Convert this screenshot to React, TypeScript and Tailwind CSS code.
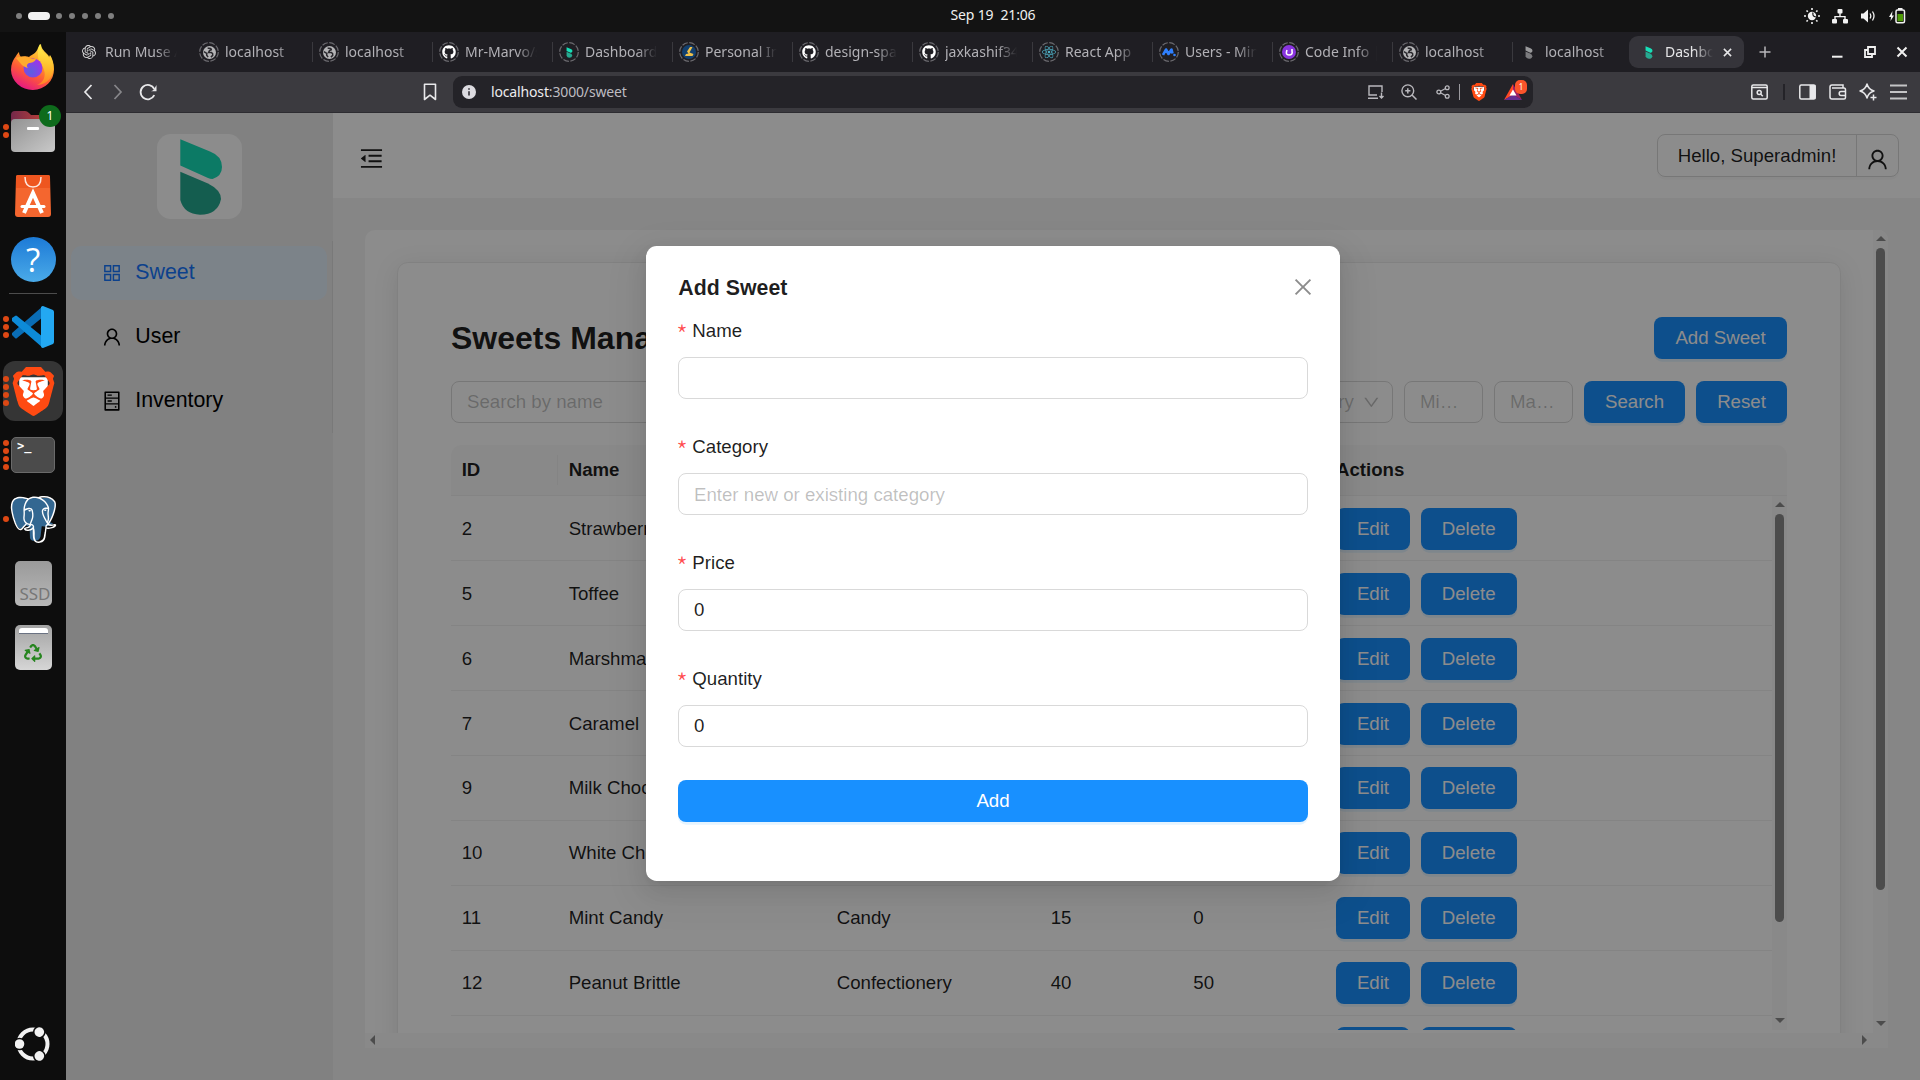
import React from "react";
import {
  AiOutlineAppstore,
  AiOutlineClose,
  AiOutlineDown,
  AiOutlineHdd,
  AiOutlineMenuFold,
  AiOutlineUser,
} from "react-icons/ai";
import { FaGithub, FaReact, FaRecycle } from "react-icons/fa";
import { SiBrave, SiOpenai, SiPostgresql } from "react-icons/si";

/* ---------- Brand drawings ---------- */

function BeeLogo({ className, top = "#17dfb8", bottom = "#26a990" }: { className?: string; top?: string; bottom?: string }) {
  return (
    <svg viewBox="22 4 44 78" className={className}>
      <path d="M23.3 5.3 L53 17.5 Q65 22 65 33 Q65 42 55.5 45 Q53 45 51 44 L23.3 31.5 Z" fill={top} />
      <path d="M23.3 37.7 L51 49.5 Q64 56 64 65 Q61 80.5 43 80.7 Q27 80 23.3 66 Z" fill={bottom} />
    </svg>
  );
}

function BraveIcon({ className }: { className: string }) {
  return (
    <span className={`relative inline-block ${className}`}>
      <svg viewBox="0 0 24 24" className="absolute inset-0 h-full w-full">
        <path d="M5 5h14v9l-7 7-7-7z" fill="#fff" />
      </svg>
      <SiBrave className="absolute inset-0 h-full w-full text-[#ff4a12]" />
    </span>
  );
}

function Firefox() {
  return (
    <svg viewBox="0 0 44 46" className="h-[46px] w-[44px]">
      <defs>
        <linearGradient id="ffBody" x1="0.8" y1="0" x2="0.3" y2="1">
          <stop offset="0" stopColor="#fff44f" />
          <stop offset="0.35" stopColor="#ffa52a" />
          <stop offset="0.65" stopColor="#ff5a36" />
          <stop offset="1" stopColor="#e31587" />
        </linearGradient>
        <linearGradient id="ffWing" x1="0.5" y1="0" x2="0.5" y2="1">
          <stop offset="0" stopColor="#fff44f" />
          <stop offset="0.6" stopColor="#ffc02c" />
          <stop offset="1" stopColor="#ff8a20" />
        </linearGradient>
        <radialGradient id="ffCore" cx="0.4" cy="0.7" r="0.7">
          <stop offset="0" stopColor="#5b5fe0" />
          <stop offset="1" stopColor="#a033e8" />
        </radialGradient>
      </defs>
      <path d="M5 12c1-2 2-3 3-4 0 2 1 4 2 5 3-1 6-1 8 0 3-3 7-3 9-9 1-2 1-3 3-4 0 4 3 7 6 10 1 1 2 2 2 3l1-2c2 3 4 8 4 14a21.500 20.500 0 0 1-43 1c0-6 2-10 5-14z" fill="url(#ffBody)" />
      <path d="M29 0c0 4 2 7 5 10 3 2 4 4 5 5l0-3c3 5 5 12 2 19-3 7-10 10-15 10 7-3 9-9 7-15-1-5-6-8-6-14 0-5 0-9 2-12z" fill="url(#ffWing)" opacity="0.85" />
      <circle cx="22" cy="24" r="9.500" fill="url(#ffCore)" />
      <path d="M5 14c5-2 10-2 13 0 1 1 4 1 7 1-1 3-5 4-7 4-2 1-3 3-1 5-5-1-7-4-12-10z" fill="#ffab2e" />
    </svg>
  );
}

function Files() {
  return (
    <svg viewBox="0 0 46 44" className="h-[44px] w-[46px]">
      <defs>
        <linearGradient id="fBack" x1="0" x2="1">
          <stop offset="0" stopColor="#74284a" />
          <stop offset="1" stopColor="#d04a34" />
        </linearGradient>
        <linearGradient id="fFront" x1="0" y1="0" x2="1" y2="1">
          <stop offset="0" stopColor="#929292" />
          <stop offset="1" stopColor="#c9c9c9" />
        </linearGradient>
      </defs>
      <path d="M1 6q0-4 4-4h10q2 0 4 2l2 2h20q3 0 3 3v12H1z" fill="url(#fBack)" />
      <rect x="1" y="10" width="44" height="33" rx="4" fill="url(#fFront)" />
      <rect x="17" y="18" width="12" height="3" rx="1" fill="#fff" />
    </svg>
  );
}

function Software() {
  return (
    <svg viewBox="0 0 36 42" className="mt-[2px] h-[42px] w-[36px]">
      <path d="M3 0h30q2 0 2 2l1 37q0 3-3 3H3q-3 0-3-3L1 2q0-2 2-2z" fill="#f4662f" />
      <path d="M3 0h30q2 0 2 2l0 11H1L1 2q0-2 2-2z" fill="#ee5620" />
      <path d="M10 2q0 10 8 10t8-10" fill="none" stroke="#fff" strokeOpacity="0.85" strokeWidth="1.500" />
      <path d="M9 38 18 18l9 20" fill="none" stroke="#fff" strokeWidth="4" />
      <path d="M7 31.500h22" stroke="#fff" strokeWidth="3" strokeLinecap="round" />
    </svg>
  );
}

function VsCode() {
  return (
    <svg viewBox="0 0 42 42" className="h-[42px] w-[42px]">
      <path d="M0 27 31 0v11L5 32q-1 1-2 0l-3-3q-1-1 0-2z" fill="#0a6db5" />
      <path d="M0 12l3-2q1-1 2 0l26 21v11L0 15q-1-2 0-3z" fill="#0d8bd8" />
      <path d="M31 0l10 4q1 1 1 2v30q0 1-1 2l-10 4q-2 0-2-2V1q1-1 2-1z" fill="#23a8f2" />
    </svg>
  );
}

function Postgres() {
  return (
    <span className="relative block size-[47px]">
      <svg viewBox="0 0 24 24" className="absolute inset-0 h-full w-full">
        <path
          d="M5.500.8C2 .8.600 3 .900 6.200c.3 3.600 2.200 9.800 4.200 10.400 1.200.3 2.200-.8 3.100-1.500l1.800.9.200 5.500c.5 2.200 4.800 2 5.400-.8l.6-5.200c2 .3 4.500-.2 5.800-1.500l-2-.8c1.800-2.800 3.600-7 3.200-9.200C22.500 1.500 19.500.5 16.500 1.200 14 .4 12 .5 10 1.700 8.500 1.100 7 .8 5.500.8z"
          fill="#336791"
        />
      </svg>
      <SiPostgresql className="absolute inset-0 h-full w-full text-white" />
    </span>
  );
}

function Trash() {
  return (
    <div className="flex h-[45px] w-[37px] flex-col items-center rounded-[5px] bg-gradient-to-b from-[#a3a3a3] to-[#d6d6d6]">
      <div className="mt-[3px] h-[6px] w-[29px] rounded-t-[3px] border-b border-gray-500 bg-white" />
      <FaRecycle className="mt-[10px] size-[18px] text-[#26851f]" />
    </div>
  );
}

function UbuntuMark() {
  return (
    <svg viewBox="-18 -18 36 36" className="size-[36px]">
      <circle r="14.500" fill="none" stroke="#f2f2f2" strokeWidth="4" />
      {[180, 62, -62].map((a) => (
        <g key={a} transform={`rotate(${a})`}>
          <circle cx="13.500" r="6.300" fill="#0d0d0d" />
          <circle cx="13.500" r="4.800" fill="#f2f2f2" />
        </g>
      ))}
    </svg>
  );
}

/* ---------- Desktop chrome ---------- */

function TopBar() {
  return (
    <div className="grid h-8 grid-cols-[1fr_auto_1fr] items-center bg-[#131313] font-['Noto_Sans',sans-serif]">
      <div className="flex items-center gap-[7px] pl-4">
        <i className="size-[6px] rounded-full bg-[#7f7f7f]" />
        <i className="-mx-px h-2 w-[22px] rounded-full bg-[#f2f2f2]" />
        {[0, 1, 2, 3, 4].map((i) => (
          <i key={i} className="size-[6px] rounded-full bg-[#7f7f7f]" />
        ))}
      </div>
      <div className="ml-[66px] whitespace-pre pb-[2px] text-[14px] leading-5 tracking-[-0.150px] text-[#f0f0f0]">Sep 19  21:06</div>
      <div className="flex items-center justify-end pr-[14px] text-[#f2f2f2]">
        <svg viewBox="0 0 16 16" className="mr-3 size-4">
          <circle cx="8" cy="8" r="4.200" fill="currentColor" />
          <path d="M8 0v2M8 14v2M0 8h2M14 8h2M2.500 2.500l1.300 1.300M12.200 12.200l1.300 1.300M2.500 13.500l1.300-1.300M12.200 3.800l1.300-1.300" stroke="currentColor" strokeWidth="1.600" />
          <path d="M9 4.500q-1 4 3 4.500" stroke="#131313" strokeWidth="1.200" fill="none" />
        </svg>
        <svg viewBox="0 0 16 16" className="mr-3 size-4" fill="currentColor">
          <rect x="5.500" y="1" width="5" height="4.500" rx="1" />
          <rect x="0" y="11" width="5" height="4.500" rx="1" />
          <rect x="11" y="11" width="5" height="4.500" rx="1" />
          <path d="M7.300 5h1.400v3h5v3h-1.400V9.300H3.700V11H2.300V8h5z" />
        </svg>
        <svg viewBox="0 0 16 16" className="mr-3 size-4">
          <path d="M1 5.500h2.500L8 1.500v13l-4.500-4H1z" fill="currentColor" />
          <path d="M10 5.500q1.600 2.500 0 5M12.500 3.500q3 4.500 0 9" stroke="currentColor" strokeWidth="1.300" fill="none" />
        </svg>
        <svg viewBox="0 0 18 16" className="h-4 w-[18px]">
          <path d="M4.500 3 1 9h2l-.5 4L6 7.500H4z" fill="currentColor" />
          <rect x="8" y="2" width="8.500" height="12.800" rx="1.500" fill="none" stroke="currentColor" strokeWidth="1.500" />
          <rect x="10" y="0" width="4.500" height="2" fill="currentColor" />
          <rect x="9.500" y="6" width="5.500" height="7.300" fill="#4e9a06" />
        </svg>
      </div>
    </div>
  );
}

function DockSlot({ dots = 0, children, active = false }: { dots?: number; children: React.ReactNode; active?: boolean }) {
  return (
    <div className="relative flex h-16 w-full shrink-0 items-center justify-center">
      {active && <div className="absolute inset-x-[3px] inset-y-[2px] rounded-[12px] bg-[#353535]" />}
      <div className="absolute left-[3px] flex flex-col gap-[2.300px]">
        {Array.from({ length: dots }).map((_, i) => (
          <i key={i} className="size-[6px] rounded-full bg-[#dd4814]" />
        ))}
      </div>
      <div className="relative flex items-center justify-center">{children}</div>
    </div>
  );
}

function Dock() {
  return (
    <div className="flex w-[66px] shrink-0 flex-col items-center bg-[#0d0d0d] pt-[3px]">
      <DockSlot><Firefox /></DockSlot>
      <DockSlot dots={2}>
        <Files />
        <span className="absolute -right-[5px] -top-[4px] flex size-[22px] items-center justify-center rounded-full bg-[#0e6b1c] font-['Noto_Sans',sans-serif] text-[12px] text-white">1</span>
      </DockSlot>
      <DockSlot><Software /></DockSlot>
      <DockSlot>
        <div className="flex size-[45px] items-center justify-center rounded-full bg-gradient-to-b from-[#1c7ad6] to-[#4aaae8] font-['Open_Sans',sans-serif] text-[33px] leading-none text-white">?</div>
      </DockSlot>
      <div className="mt-[2px] mb-[1px] h-px w-12 shrink-0 bg-[#4c4c4c]" />
      <DockSlot dots={3}><VsCode /></DockSlot>
      <DockSlot dots={4} active>
        <BraveIcon className="size-[49px]" />
      </DockSlot>
      <DockSlot dots={4}>
        <div className="h-[36px] w-[44px] rounded-[5px] border border-[#6a6a6a] bg-[#4b4b4b] pl-[5px] font-['DejaVu_Sans_Mono',monospace] text-[12px] leading-4 font-bold text-white">&gt;_</div>
      </DockSlot>
      <DockSlot dots={1}><Postgres /></DockSlot>
      <DockSlot>
        <div className="flex h-[45px] w-[37px] items-end justify-end rounded-[5px] bg-gradient-to-b from-[#9a9a9a] to-[#b8b8b8] pr-px pb-[4px] font-['Noto_Sans',sans-serif] text-[17px] leading-4 text-[#777]">SSD</div>
      </DockSlot>
      <DockSlot><Trash /></DockSlot>
      <div className="mt-auto mb-[18px]"><UbuntuMark /></div>
    </div>
  );
}

/* ---------- Browser ---------- */

type TabKind = "openai" | "globe" | "github" | "bee" | "personal" | "react" | "users" | "code" | "beeGray";

const TABS: { kind: TabKind; title: string }[] = [
  { kind: "openai", title: "Run Muse A" },
  { kind: "globe", title: "localhost" },
  { kind: "globe", title: "localhost" },
  { kind: "github", title: "Mr-Marvo/s" },
  { kind: "bee", title: "Dashboard" },
  { kind: "personal", title: "Personal Inf" },
  { kind: "github", title: "design-spac" },
  { kind: "github", title: "jaxkashif34/" },
  { kind: "react", title: "React App" },
  { kind: "users", title: "Users - Mint" },
  { kind: "code", title: "Code Info |" },
  { kind: "globe", title: "localhost" },
  { kind: "beeGray", title: "localhost" },
];

function Favicon({ kind }: { kind: TabKind }) {
  switch (kind) {
    case "openai":
      return <SiOpenai className="size-[14px] text-[#d8d8d8]" />;
    case "globe":
      return (
        <svg viewBox="0 0 14 14" className="size-[13px]">
          <circle cx="7" cy="7" r="7" fill="#b4b4b6" />
          <path d="M5 2.500q4-.5 4 1.500l-2 1-1 2h3q2 1 1.500 3L8.500 12M1 6l3 2v2l1.500 2" fill="none" stroke="#29282d" strokeWidth="1.600" />
        </svg>
      );
    case "github":
      return <FaGithub className="size-[14px] text-white" />;
    case "bee":
      return <BeeLogo className="h-[11px] w-[7px]" />;
    case "beeGray":
      return <BeeLogo className="h-[13px] w-[8px]" top="#9a9a9c" bottom="#7b7b7e" />;
    case "personal":
      return (
        <svg viewBox="0 0 14 14" className="size-[14px]">
          <circle cx="7" cy="7" r="7" fill="#12406f" />
          <path d="M8 2h2.500L7.500 7.500l4 1.500-1 2H3l1-2 2.500-.5L5 6.500z" fill="#efc04a" />
        </svg>
      );
    case "react":
      return <FaReact className="size-[14px] text-[#4fb0c6]" />;
    case "users":
      return (
        <svg viewBox="0 0 14 14" className="size-[14px]">
          <path d="M1 10 4 4.500 6.500 9 9.500 4.500 10.500 8.500" fill="none" stroke="#2f80ff" strokeWidth="2.600" strokeLinejoin="round" />
          <circle cx="12.500" cy="10" r="1.300" fill="#2f80ff" />
        </svg>
      );
    case "code":
      return (
        <svg viewBox="0 0 14 14" className="size-[14px]">
          <circle cx="7" cy="7" r="7" fill="#8a35e0" />
          <path d="M5 5q-2 5 2 5t3-4V4" fill="none" stroke="#fff" strokeWidth="1.600" />
        </svg>
      );
  }
}

function TabStrip() {
  return (
    <div className="flex h-10 items-center bg-[#1f1e23] pl-[7px] font-['Noto_Sans',sans-serif] text-[14px] text-[#b2b1b6]">
      {TABS.map((t, i) => {
        const ringed = t.kind !== "openai" && t.kind !== "beeGray";
        return (
          <div key={i} className="flex h-8 w-[120px] shrink-0 items-center pl-[6px]">
            <span className="relative flex size-5 shrink-0 items-center justify-center">
              {ringed && (
                <svg viewBox="0 0 20 20" className="absolute inset-0">
                  <circle cx="10" cy="10" r="9.300" fill="none" stroke="#6b6a6f" strokeWidth="1.200" strokeDasharray="5.800 1.500" />
                </svg>
              )}
              <Favicon kind={t.kind} />
            </span>
            <span className="ml-[6px] w-[72px] overflow-hidden pb-[2px] whitespace-nowrap [mask-image:linear-gradient(to_right,#000_72%,transparent)]">
              {t.title}
            </span>
            <span className={i === 0 || i === 12 ? "w-px" : "ml-auto h-5 w-px bg-[#3a393e]"} />
          </div>
        );
      })}
      <div className="-ml-[4px] flex h-8 w-[115px] shrink-0 items-center rounded-[9px] bg-[#35343a] pl-[16px] text-[#e6e6e8]">
        <BeeLogo className="h-[13px] w-[8px]" />
        <span className="ml-[12px] w-[48px] overflow-hidden pb-[2px] whitespace-nowrap [mask-image:linear-gradient(to_right,#000_60%,transparent)]">Dashboard</span>
        <svg viewBox="0 0 10 10" className="ml-[10px] size-[9px]">
          <path d="M1 1l8 8M9 1 1 9" stroke="currentColor" strokeWidth="1.700" />
        </svg>
      </div>
      <svg viewBox="0 0 12 12" className="ml-[15px] size-[12px]">
        <path d="M6 .5v11M.5 6h11" stroke="#b8b7bb" strokeWidth="1.500" />
      </svg>
      <div className="ml-auto flex items-center gap-[20.500px] pr-[12px] text-[#f0f0f0]">
        <svg viewBox="0 0 12 12" className="size-[12px]"><path d="M1 10.700h10.500" stroke="currentColor" strokeWidth="2" /></svg>
        <svg viewBox="0 0 12 12" className="size-[12px]">
          <path d="M4 1h7v7H4zM4 4H1v7h7V8" fill="none" stroke="currentColor" strokeWidth="1.800" />
        </svg>
        <svg viewBox="0 0 12 12" className="size-[12px]"><path d="M1.500 1.500l9 9M10.500 1.500l-9 9" stroke="currentColor" strokeWidth="2" /></svg>
      </div>
    </div>
  );
}

function Toolbar() {
  return (
    <div className="flex h-[41px] items-center border-b border-[#2d2c31] bg-[#3b3a3f] text-[#e8e8ea]">
      <svg viewBox="0 0 10 16" className="ml-[17px] h-4 w-[10px]"><path d="M8.500 1 2 8l6.500 7" fill="none" stroke="currentColor" strokeWidth="1.700" /></svg>
      <svg viewBox="0 0 10 16" className="ml-[20px] h-4 w-[10px] text-[#88878b]"><path d="M1.500 1 8 8l-6.500 7" fill="none" stroke="currentColor" strokeWidth="1.700" /></svg>
      <svg viewBox="0 0 18 18" className="ml-[16px] size-[18px]">
        <path d="M15.300 12.200a7.200 7.200 0 1 1 0-6.200" fill="none" stroke="currentColor" strokeWidth="1.800" />
        <path d="M17.500 2v6.300h-5.500q2-.5 3-2z" fill="currentColor" />
      </svg>
      <svg viewBox="0 0 14 18" className="ml-[266px] h-[18px] w-[14px]"><path d="M1.500 1.200h11v15.300L7 12.200l-5.500 4.300z" fill="none" stroke="currentColor" strokeWidth="1.600" strokeLinejoin="round" /></svg>

      <div className="ml-4 flex h-8 w-[1080px] items-center rounded-[9px] bg-[#242328] pl-[9px]">
        <svg viewBox="0 0 14 14" className="size-[14px]">
          <circle cx="7" cy="7" r="7" fill="#dcdbe0" />
          <path d="M7 6.200v4.300M7 3.200v1.600" stroke="#242328" strokeWidth="1.500" />
        </svg>
        <span className="ml-[15px] pb-[2px] font-['Noto_Sans',sans-serif] text-[14px] tracking-[-0.150px]">
          <span className="text-[#ececee]">localhost</span>
          <span className="text-[#bdbcc1]">:3000/sweet</span>
        </span>
        <div className="ml-auto flex items-center text-[#b9b8bd]">
          <svg viewBox="0 0 17 14" className="h-[14px] w-[17px]">
            <path d="M11 13.200H1M10 10H2V1h13v6M14.500 7.500v5.500M12.500 11l2 2 2-2" fill="none" stroke="currentColor" strokeWidth="1.400" />
          </svg>
          <svg viewBox="0 0 16 16" className="ml-[17px] size-[16px]">
            <path d="M11 11l4.500 4.500M6.800 4.200v5.200M4.200 6.800h5.200" stroke="currentColor" strokeWidth="1.500" />
            <circle cx="6.800" cy="6.800" r="5.900" fill="none" stroke="currentColor" strokeWidth="1.400" />
          </svg>
          <svg viewBox="0 0 14 14" className="ml-[19px] size-[14px]">
            <path d="M4.500 6.300l5-2.800M4.500 7.700l5 2.800" stroke="currentColor" strokeWidth="1.200" />
            <g fill="none" stroke="currentColor" strokeWidth="1.300">
              <circle cx="2.800" cy="7" r="1.900" /><circle cx="11.200" cy="2.800" r="1.900" /><circle cx="11.200" cy="11.200" r="1.900" />
            </g>
          </svg>
          <span className="ml-[9px] h-4 w-px bg-[#9b9a9f]" />
          <BraveIcon className="ml-[10px] size-[18px]" />
          <span className="relative mr-[11px] ml-[16px] block h-[16px] w-[18px]">
            <svg viewBox="0 0 18 16" className="h-[16px] w-[18px]">
              <path d="M9 0 0 16l9-5z" fill="#ff4724" />
              <path d="M9 0l9 16-9-5z" fill="#9e1f63" />
              <path d="M0 16h18l-9-5.500z" fill="#662d91" />
              <path d="M9 5.500l3.500 6h-7z" fill="#fff" />
            </svg>
            <span className="absolute -top-[4px] -right-[5px] flex h-[14px] w-[12px] items-center justify-center rounded-[5px] bg-[#fb542b] font-['Noto_Sans',sans-serif] text-[8px] leading-none text-white">1</span>
          </span>
        </div>
      </div>

      <div className="ml-auto flex items-center pr-[13px]">
        <svg viewBox="0 0 17 16" className="h-4 w-[17px]" fill="none" stroke="currentColor" strokeWidth="1.500">
          <rect x="0.800" y="1" width="15.400" height="14" rx="1.500" /><path d="M1 3.500h15" />
          <circle cx="8.200" cy="8.500" r="2" /><path d="M9.800 10.200l2 2" />
        </svg>
        <span className="ml-[15px] h-4 w-[2px] bg-[#242328]" />
        <svg viewBox="0 0 17 16" className="ml-[14px] h-4 w-[17px]">
          <rect x="0.800" y="1" width="15.400" height="14" rx="1.500" fill="none" stroke="currentColor" strokeWidth="1.500" />
          <rect x="10.500" y="1" width="6" height="14" fill="currentColor" />
        </svg>
        <svg viewBox="0 0 18 16" className="ml-[13px] h-4 w-[18px]" fill="none" stroke="currentColor" strokeWidth="1.500">
          <path d="M14 4V1H3Q1 1 1 3v10q0 2 2 2h12q1.500 0 1.500-1.500V6Q16.500 4 15 4H3" />
          <path d="M17 7.500h-5q-1.800 0-1.800 2t1.800 2h5" />
        </svg>
        <svg viewBox="0 0 18 18" className="ml-[12px] size-[18px]" fill="none" stroke="currentColor" strokeWidth="1.500">
          <path d="M8 1q1.500 5.500 7 7-5.500 1.500-7 7-1.500-5.500-7-7 5.500-1.500 7-7z" strokeLinejoin="round" />
          <path d="M14.500 11.500v6M11.500 14.500h6" />
        </svg>
        <svg viewBox="0 0 17 16" className="ml-[13px] h-4 w-[17px]"><path d="M0 1.500h17M0 8h17M0 14.500h17" stroke="#c4c4c6" strokeWidth="1.800" /></svg>
      </div>
    </div>
  );
}

/* ---------- Dashboard ---------- */

const MENU = [
  { label: "Sweet", Icon: AiOutlineAppstore, selected: true },
  { label: "User", Icon: AiOutlineUser, selected: false },
  { label: "Inventory", Icon: AiOutlineHdd, selected: false },
];

function Sidebar() {
  return (
    <aside className="flex w-[267px] shrink-0 flex-col bg-[#ebebeb] pt-[21px]">
      <div className="ml-[91px] flex size-[85px] items-center justify-center rounded-[14px] bg-white">
        <BeeLogo className="ml-[2px] h-[78px] w-[44px]" />
      </div>
      <nav className="mt-[22px] flex flex-col gap-[10.67px] border-r border-black/6 py-[5.33px]">
        {MENU.map(({ label, Icon, selected }) => (
          <div
            key={label}
            className={`mx-[5.33px] flex h-[53.33px] items-center rounded-[10.67px] pb-[1.5px] pl-[30px] text-[21.33px] ${selected ? "bg-[#e2eefa] text-[#1677ff]" : "text-black"}`}
          >
            <Icon className="mt-[2px] size-[22px]" />
            <span className="ml-[12px]">{label}</span>
          </div>
        ))}
      </nav>
    </aside>
  );
}

const ROWS = [
  ["2", "Strawberry Bonbon", "Candy", "20", "30"],
  ["5", "Toffee", "Candy", "10", "40"],
  ["6", "Marshmallow", "Candy", "12", "25"],
  ["7", "Caramel", "Candy", "18", "35"],
  ["9", "Milk Chocolate", "Chocolate", "30", "20"],
  ["10", "White Chocolate", "Chocolate", "35", "15"],
  ["11", "Mint Candy", "Candy", "15", "0"],
  ["12", "Peanut Brittle", "Confectionery", "40", "50"],
  ["13", "Fudge", "Confectionery", "25", "10"],
];

function Button({ children, className = "" }: { children: React.ReactNode; className?: string }) {
  return (
    <button className={`flex h-[42px] shrink-0 items-center justify-center rounded-lg bg-[#1890ff] text-white shadow-[0_2.67px_0_rgba(5,145,255,0.1)] ${className}`}>
      {children}
    </button>
  );
}

function VScroll({ thumb }: { thumb: string }) {
  return (
    <div className="flex w-[15px] shrink-0 flex-col items-center bg-[#fafafa] pt-[6px] pb-[7px]">
      <svg viewBox="0 0 10 5" className="h-[5px] w-[10px]"><path d="M0 5 5 0l5 5z" fill="#8a8a8a" /></svg>
      <div className={`mt-[7px] w-[9px] rounded-full bg-[#8b8b8b] ${thumb}`} />
      <svg viewBox="0 0 10 5" className="mt-auto h-[5px] w-[10px]"><path d="M0 0l5 5 5-5z" fill="#8a8a8a" /></svg>
    </div>
  );
}

const COLS = "grid grid-cols-[107px_268px_214px_142.67px_142.67px_1fr]";

function SweetsTable() {
  const headers = ["ID", "Name", "Category", "Price", "Quantity", "Actions"];
  return (
    <div className="mt-[22px]">
      <div className={`${COLS} h-[51px] items-center rounded-t-[10.67px] border-b border-[#f0f0f0] bg-[#fafafa] pb-px font-bold`}>
        {headers.map((h, i) => (
          <div key={h} className={`flex h-[30px] items-center pl-[10.67px] ${i < 5 ? "border-r border-[#f0f0f0]" : ""}`}>{h}</div>
        ))}
      </div>
      <div className="flex h-[534px] overflow-hidden">
        <div className="min-w-0 flex-1">
          {ROWS.map((r, index) => (
            <div key={r[0]} className={`${COLS} h-[65px] items-center border-b border-[#f0f0f0] ${index < 4 ? "pt-px" : ""}`}>
              {r.map((c, i) => (
                <div key={i} className="pl-[10.67px]">{c}</div>
              ))}
              <div className="flex gap-[10.67px] pl-[10.67px]">
                <Button className="w-[74px]">Edit</Button>
                <Button className="w-[96px]">Delete</Button>
              </div>
            </div>
          ))}
        </div>
        <VScroll thumb="h-[408px]" />
      </div>
    </div>
  );
}

function Content() {
  const field = "flex h-[42px] shrink-0 items-center rounded-lg border border-[#d9d9d9] text-black/25";
  return (
    <div className="mx-8 mt-8 flex h-[818px] flex-col overflow-hidden rounded-t-[10px] bg-white">
      <div className="flex h-[803px]">
        <div className="min-w-0 flex-1 overflow-hidden pt-8 pr-[32px] pl-8">
          <section className="h-[900px] rounded-[10.67px] border border-[#ebebeb] pt-[54px] pr-[53px] pl-[53px] shadow-[0_5px_26px_rgba(0,0,0,0.1)]">
            <div className="flex h-[42px] items-center justify-between">
              <h2 className="text-[32px] leading-[42px] font-bold text-black/88">Sweets Management</h2>
              <Button className="w-[133px]">Add Sweet</Button>
            </div>
            <div className="mt-[22px] flex gap-[11px]">
              <div className={`${field} w-[580px] pl-[15px]`}>Search by name</div>
              <div className={`${field} min-w-0 flex-1 justify-end pr-[11.500px]`}>
                <span>Select category</span>
                <AiOutlineDown className="ml-[8px] size-[18.67px]" />
              </div>
              <div className={`${field} w-[79px] pl-[15px]`}>Mi…</div>
              <div className={`${field} w-[79px] pl-[15px]`}>Ma…</div>
              <Button className="w-[101px]">Search</Button>
              <Button className="w-[91px]">Reset</Button>
            </div>
            <SweetsTable />
          </section>
        </div>
        <VScroll thumb="h-[642px]" />
      </div>
      <div className="flex h-[15px] items-center justify-between bg-[#fafafa] pr-[21px] pb-px pl-[5px]">
        <svg viewBox="0 0 5 10" className="h-[10px] w-[5px]"><path d="M5 0 0 5l5 5z" fill="#8a8a8a" /></svg>
        <svg viewBox="0 0 5 10" className="h-[10px] w-[5px]"><path d="M0 0l5 5-5 5z" fill="#8a8a8a" /></svg>
      </div>
    </div>
  );
}

function AddSweetModal() {
  const fields = [
    { label: "Name", value: "", placeholder: false },
    { label: "Category", value: "Enter new or existing category", placeholder: true },
    { label: "Price", value: "0", placeholder: false },
    { label: "Quantity", value: "0", placeholder: false },
  ];
  return (
    <div className="absolute inset-0 flex items-start justify-center bg-black/45 pt-[133px]">
      <div className="h-[635px] w-[693.33px] rounded-[10.67px] bg-white px-8 pt-[26px] text-black/88 shadow-[0_8px_21px_rgba(0,0,0,0.08),0_4px_8px_-5px_rgba(0,0,0,0.12),0_12px_37px_11px_rgba(0,0,0,0.05)]">
        <div className="flex h-8 items-center justify-between">
          <h3 className="text-[21.33px] font-bold">Add Sweet</h3>
          <AiOutlineClose className="-mt-[2px] mr-[-7px] size-[24px] text-black/45" />
        </div>
        {fields.map((f) => (
          <div key={f.label} className="h-[116px] pt-[11px]">
            <div className="flex h-[32px] items-center">
              <span className="mr-[6px] -ml-[2px] w-[10px] pt-[5px] font-['Noto_Sans_CJK_SC',sans-serif] text-[26px] leading-[20px] font-light text-[#ff4d4f]">*</span>
              {f.label}
            </div>
            <div className={`mt-[10px] flex h-[42px] items-center rounded-lg border border-[#d9d9d9] pl-[14.67px] ${f.placeholder ? "pt-px text-black/25" : ""}`}>
              {f.value}
            </div>
          </div>
        ))}
        <Button className="mt-[12px] w-full">Add</Button>
      </div>
    </div>
  );
}

function Dashboard() {
  return (
    <div className="relative flex flex-1 overflow-hidden bg-[#f5f5f5] font-['Liberation_Sans',Arial,sans-serif] text-[18.67px] leading-[28px] text-black/88">
      <Sidebar />
      <main className="min-w-0 flex-1">
        <header className="flex h-[85px] items-center justify-between bg-white pr-[21px] pl-[25px]">
          <AiOutlineMenuFold className="mt-[6px] size-[27px]" />
          <div className="flex h-[43px] rounded-lg border border-[#d9d9d9] shadow-[0_2.67px_0_rgba(0,0,0,0.02)]">
            <div className="flex w-[199px] items-center justify-center border-r border-[#d9d9d9]">Hello, Superadmin!</div>
            <div className="flex w-[41px] items-center justify-center pt-[7px]">
              <AiOutlineUser className="size-[25px]" />
            </div>
          </div>
        </header>
        <Content />
      </main>
      <AddSweetModal />
    </div>
  );
}

export default function App() {
  return (
    <div className="flex h-[1080px] w-[1920px] flex-col overflow-hidden bg-[#131313]">
      <TopBar />
      <div className="flex min-h-0 flex-1">
        <Dock />
        <div className="flex min-w-0 flex-1 flex-col">
          <TabStrip />
          <Toolbar />
          <Dashboard />
        </div>
      </div>
    </div>
  );
}
